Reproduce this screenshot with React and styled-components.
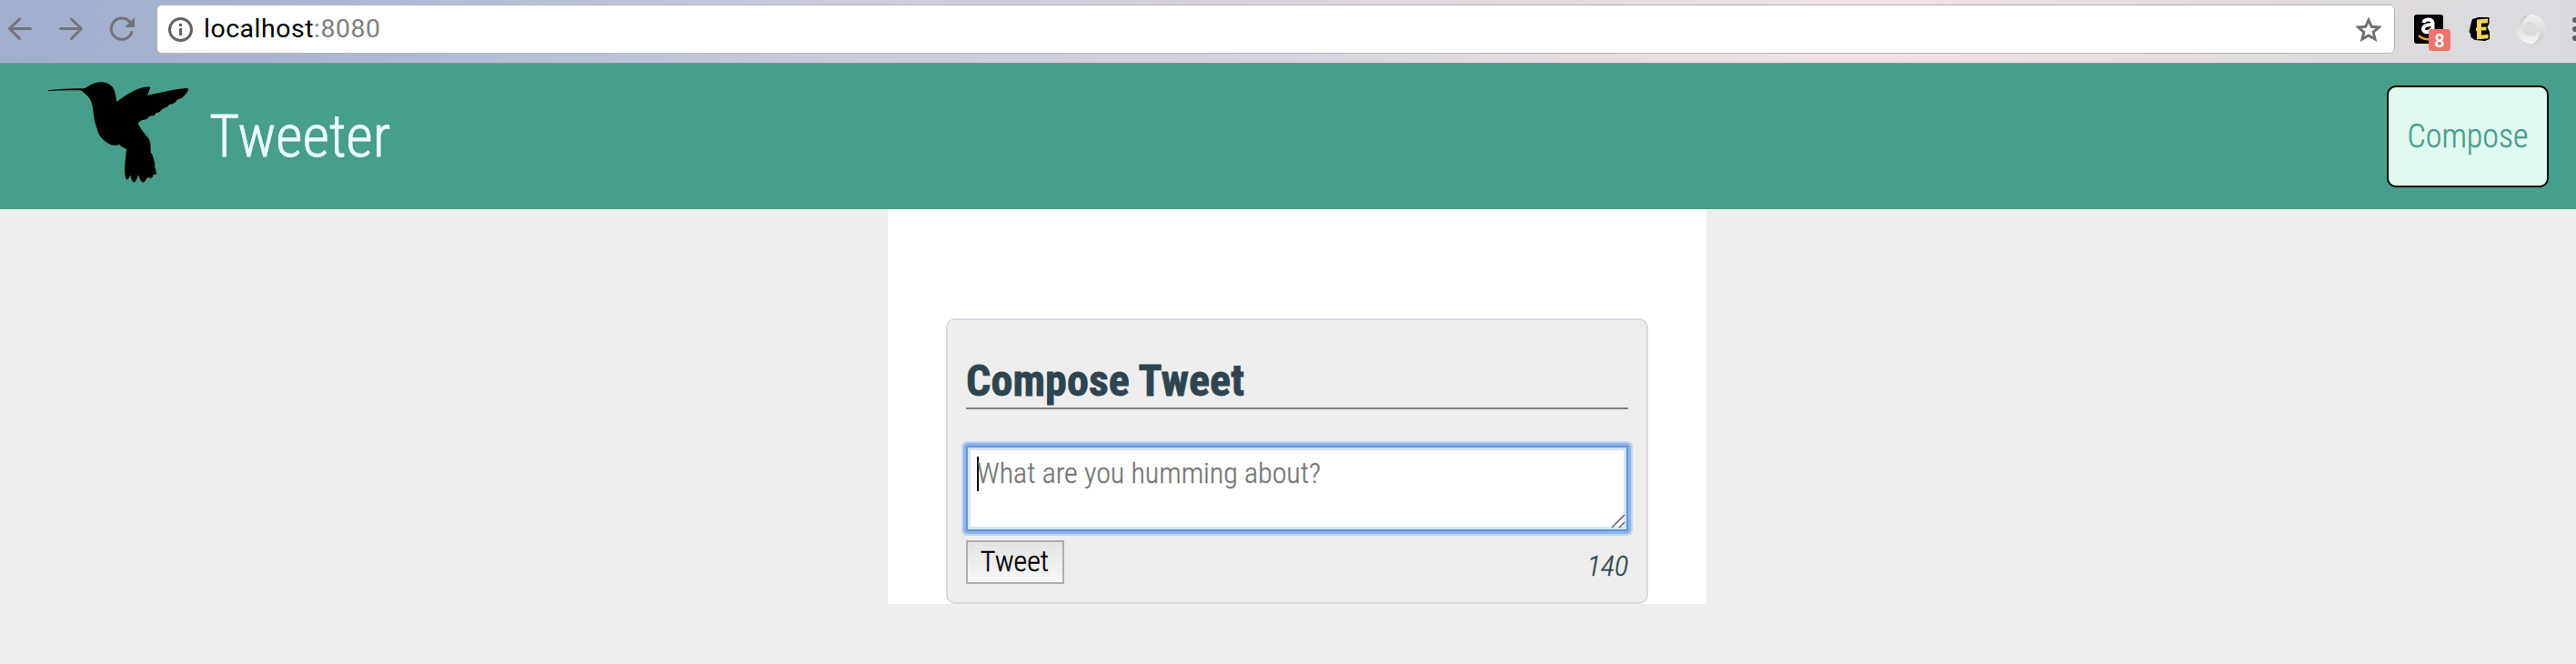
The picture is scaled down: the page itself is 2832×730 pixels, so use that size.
import React from "react";
import styled, { createGlobalStyle } from "styled-components";

const condensed = `"Roboto Condensed", Roboto, sans-serif`;

const GlobalStyle = createGlobalStyle`
  * { box-sizing: border-box; }
  body { margin: 0; background: #eeeeee; font-family: ${condensed}; font-stretch: 75%; color: #2d4550; }
`;

const Page = styled.div`
  height: 730px;
  overflow: hidden;
  display: flex;
  flex-direction: column;
`;

const Toolbar = styled.div`
  flex: none;
  height: 70px;
  display: flex;
  align-items: flex-start;
  padding: 5px 0 0 8px;
  border-bottom: 1px solid #8b8e9c;
  background: linear-gradient(90deg, #9fafcc 0%, #a9b4d0 11%, #b5bfd6 20%, #cbcbdc 32%, #d5d0db 45%, #e2dadf 58%, #eee2e2 70%, #ece0e2 78%, #dfdadd 90%, #dadade 100%);
`;

const ToolIcon = styled.svg`
  flex: none;
  display: block;
  width: ${(p) => p.$w}px;
  height: 54px;
  margin-right: ${(p) => p.$gap || 0}px;
`;

const AddressBar = styled.div`
  flex: none;
  width: 2461px;
  height: 54px;
  display: flex;
  align-items: center;
  background: #fff;
  border: 1px solid #b4b4ba;
  border-radius: 6px;
  padding: 0 13px 0 12px;
`;

const Url = styled.div`
  flex: 1;
  font: 400 28.5px/56px Roboto, sans-serif;
  font-stretch: 100%;
  letter-spacing: 0.5px;
  color: #000;
  padding: 0 0 0 11px;
  span { color: #808080; }
`;

const Extension = styled.div`
  flex: none;
  position: relative;
  width: ${(p) => p.$w}px;
  margin-left: ${(p) => p.$gap}px;
  height: 54px;
`;

const Badge = styled.div`
  position: absolute;
  left: 16px;
  top: 27px;
  width: 24px;
  height: 24px;
  border-radius: 3px;
  background: #f1736b;
  color: #fff;
  font: 600 20px/27px Roboto, sans-serif;
  text-align: center;
`;

const Header = styled.header`
  flex: none;
  height: 160px;
  display: flex;
  align-items: center;
  justify-content: space-between;
  padding: 0 30px 0 40px;
  background: #479e89;
`;

const Brand = styled.div`
  display: flex;
  align-items: flex-start;
  height: 160px;
`;

const Bird = styled.svg`
  display: block;
  width: 180px;
  height: 140px;
  margin-top: 5px;
`;

const Title = styled.h1`
  margin: 0 0 0 10px;
  font-size: 64px;
  font-weight: 300;
  line-height: 161px;
  color: #eafaff;
  -webkit-text-stroke: 0.8px #eafaff;
`;

const ComposeButton = styled.button`
  width: 178px;
  height: 112px;
  border: 2px solid #000;
  border-radius: 10px;
  background: #e0faf2;
  color: #489e89;
  font-family: ${condensed};
  font-stretch: 75%;
  font-weight: 300;
  font-size: 36px;
  -webkit-text-stroke: 0.4px #489e89;
  padding: 0;
`;

const Container = styled.main`
  width: 900px;
  height: 434px;
  margin-left: 976px;
  padding: 120px 64px 0;
  background: #fff;
`;

const Card = styled.section`
  height: 314px;
  border: 2px solid #d7dae2;
  border-radius: 10px;
  background: #eeeeee;
  padding: 38px 20px 0;
`;

const CardTitle = styled.h2`
  margin: 0 0 40px;
  height: 60px;
  border-bottom: 2px solid #808080;
  font-size: 48px;
  font-weight: 700;
  line-height: 58px;
  letter-spacing: 0.08px;
  -webkit-text-stroke: 0.8px #2d4550;
`;

const TweetBox = styled.div`
  position: relative;
  height: 94px;
  background: #fff;
  border: 2px solid #6795d3;
  border-radius: 2px;
  box-shadow: 0 0 0 3px #8ab4ee, 0 0 0 5px #c2d6f2, inset 0 0 0 3px #d5e4fa;
  padding: 10px 10px;
  display: flex;
`;

const Caret = styled.div`
  width: 2px;
  height: 38px;
  background: #000;
  margin-right: -2px;
`;

const Placeholder = styled.div`
  font-size: 32px;
  font-weight: 300;
  line-height: 36px;
  color: #757575;
  -webkit-text-stroke: 0.3px #757575;
`;

const Grip = styled.svg`
  position: absolute;
  right: 1px;
  bottom: 1px;
`;

const Actions = styled.div`
  display: flex;
  justify-content: space-between;
  padding-top: 10px;
`;

const TweetButton = styled.button`
  width: 108px;
  height: 48px;
  border: 2px solid #adadad;
  background: linear-gradient(#e3e3e3, #f8f8f8);
  font-family: ${condensed};
  font-stretch: 75%;
  font-size: 32px;
  font-weight: 300;
  line-height: 38px;
  color: #000;
  -webkit-text-stroke: 0.4px #000;
  padding: 0 1px 3px 0;
`;

const Counter = styled.span`
  font-size: 32px;
  font-style: italic;
  font-weight: 300;
  line-height: 38px;
  padding-top: 9px;
  -webkit-text-stroke: 0.4px #2d4550;
`;

export default function App() {
  return (
    <Page>
      <GlobalStyle />
      <Toolbar>
        <ToolIcon $w={28} $gap={28} viewBox="0 0 28 54" fill="none" stroke="#737478" strokeWidth="3" strokeLinecap="round" strokeLinejoin="round">
          <path d="M13.5 16 L2.5 26.5 L13.5 37.5 M3 26.5 H25.5" />
        </ToolIcon>
        <ToolIcon $w={28} $gap={28} viewBox="0 0 28 54" fill="none" stroke="#737478" strokeWidth="3" strokeLinecap="round" strokeLinejoin="round">
          <path d="M14.5 16 L25.5 26.5 L14.5 37.5 M25 26.5 H2.5" />
        </ToolIcon>
        <ToolIcon $w={30} $gap={22} viewBox="0 0 30 54">
          <path d="M24.8 30.5 A11.6 11.6 0 1 1 22.5 19" fill="none" stroke="#737478" strokeWidth="3" strokeLinecap="round" />
          <path d="M28 14 V25 H17 Z" fill="#737478" />
        </ToolIcon>
        <AddressBar>
          <ToolIcon $w={28} viewBox="0 0 28 54">
            <circle cx="13.5" cy="27.5" r="12" fill="none" stroke="#5f6368" strokeWidth="3" />
            <path d="M12 21 h3 v3 h-3 Z M12 26 h3 v8 h-3 Z" fill="#5f6368" />
          </ToolIcon>
          <Url>localhost<span>:8080</span></Url>
          <ToolIcon $w={30} viewBox="0 0 30 54" fill="none" stroke="#6e7277" strokeWidth="3">
            <path d="M15 17 L18.3 24.3 L26.2 25 L20.2 30.3 L22 38 L15 34 L8 38 L9.8 30.3 L3.8 25 L11.7 24.3 Z" />
          </ToolIcon>
        </AddressBar>
        <Extension $w={40} $gap={21}>
          <svg width="32" height="54" viewBox="0 0 32 54">
            <rect y="11" width="32" height="32" rx="3" fill="#000" />
            <path d="M10.5 20 C11 15.500 20 15 20.500 20 V28 L22 30.500 M20 22 C13 22 10 23.500 10 27 C10 31.500 18 31.500 20 26" fill="none" stroke="#fff" strokeWidth="4" />
            <path d="M5 34 Q14 42 27 35" fill="none" stroke="#ee9a2d" strokeWidth="2.500" />
          </svg>
          <Badge>8</Badge>
        </Extension>
        <Extension $w={24} $gap={20}>
          <svg width="24" height="54" viewBox="0 0 24 54">
            <path d="M4 16 L11 14 L22.500 14 L22.500 21 L20.500 25 L23 30 L23 38 L18 40 L7 39 L2.500 36 L2 32 L0.500 30 L2.500 21 Z" fill="#000" />
            <path d="M9 16.500 L21 15.500 V20.300 L14 20.800 V24.800 L19.500 24.500 V28.200 L14 28.500 V33.500 L21.500 32.800 V37.300 L9 38.300 V29 H8 V25.500 H9 Z" fill="#f5d45c" />
          </svg>
        </Extension>
        <Extension $w={32} $gap={28}>
          <svg width="32" height="54" viewBox="0 0 32 54">
            <defs>
              <linearGradient id="swirlA" x1="0" y1="0" x2="0" y2="1"><stop stopColor="#f2f2f2" /><stop offset="1" stopColor="#c9c9c9" /></linearGradient>
              <linearGradient id="swirlB" x1="0" y1="0" x2="0" y2="1"><stop stopColor="#c6c6c6" /><stop offset="1" stopColor="#f8f8f8" /></linearGradient>
            </defs>
            <path d="M16 11 A16 16 0 0 1 18 43 C27 38 28 23 16 19 C11 19 8 22 8 27 C5 20 9 12 16 11Z" fill="url(#swirlA)" />
            <path d="M16 11 A16 16 0 1 0 18 43 C25 40 27 34 24 27 C24 32 21 35 16 35 C4 33 4 16 16 11Z" fill="url(#swirlB)" />
          </svg>
        </Extension>
        <Extension $w={5} $gap={30}>
          <svg width="5" height="54" viewBox="0 0 5 54" fill="#5c6065">
            <circle cx="3" cy="17" r="3" /><circle cx="3" cy="27" r="3" /><circle cx="3" cy="37" r="3" />
          </svg>
        </Extension>
      </Toolbar>
      <Header>
        <Brand>
          <Bird viewBox="0 0 540 420">
            <path d="M38 73 C75 69 115 66 153 67 C162 66 166 63 171 60 C188 47 211 43 229 48 C247 53 257 66 260 84 L265 111 C287 94 313 76 343 66 C354 62 368 60 376 63 L372 73 L371 79 L365 89 L420 78 C450 72 475 67 495 66 C501 66 503 69 500 75 C495 83 489 90 482 97 L464 104 L459 112 L449 118 L439 119 L430 128 L416 134 L407 144 L395 148 L388 156 L373 158 L364 168 L350 171 C342 174 338 178 335 182 C344 200 355 213 367 228 C376 238 377 249 377 277 C384 286 387 298 390 313 C392 321 388 323 393 332 L396 350 L386 350 C384 362 377 366 367 359 C362 367 358 375 352 377 C344 373 339 362 336 351 C332 364 328 375 321 377 C315 373 312 365 310 352 C307 361 304 368 298 368 C291 359 291 338 292 318 L297 266 C287 262 277 256 273 251 C266 256 250 256 239 249 C223 240 208 226 203 211 C200 192 191 180 190 158 C186 139 187 116 176 101 C169 91 162 84 154 79 C150 73 142 73 131 73 C100 72 70 73 40 75 Z" fill="#000" />
          </Bird>
          <Title>Tweeter</Title>
        </Brand>
        <ComposeButton>Compose</ComposeButton>
      </Header>
      <Container>
        <Card>
          <CardTitle>Compose Tweet</CardTitle>
          <TweetBox>
            <Caret />
            <Placeholder>What are you humming about?</Placeholder>
            <Grip width="16" height="16" viewBox="0 0 16 16" stroke="#555" strokeWidth="1.400">
              <path d="M1 15 L15 1 M9 15 L15 9" />
            </Grip>
          </TweetBox>
          <Actions>
            <TweetButton>Tweet</TweetButton>
            <Counter>140</Counter>
          </Actions>
        </Card>
      </Container>
    </Page>
  );
}
